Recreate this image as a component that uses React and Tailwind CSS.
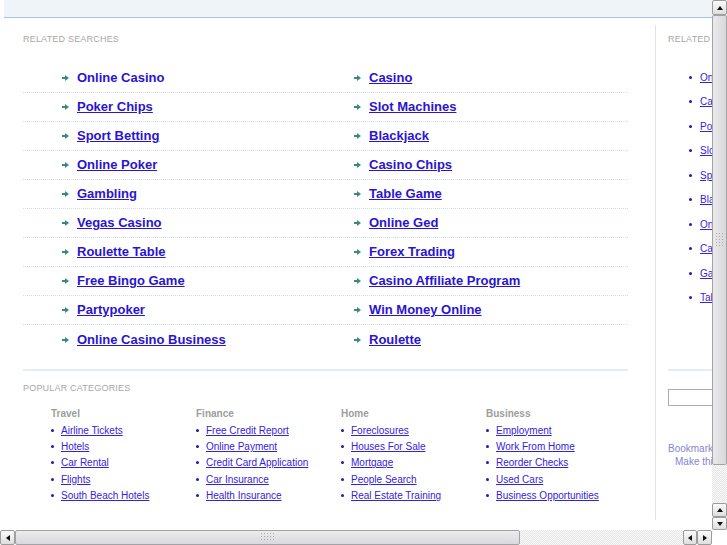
import React from 'react';

const related = [
  ['Online Casino', 'Casino'],
  ['Poker Chips', 'Slot Machines'],
  ['Sport Betting', 'Blackjack'],
  ['Online Poker', 'Casino Chips'],
  ['Gambling', 'Table Game'],
  ['Vegas Casino', 'Online Ged'],
  ['Roulette Table', 'Forex Trading'],
  ['Free Bingo Game', 'Casino Affiliate Program'],
  ['Partypoker', 'Win Money Online'],
  ['Online Casino Business', 'Roulette'],
];

const categories = [
  { title: 'Travel', links: ['Airline Tickets', 'Hotels', 'Car Rental', 'Flights', 'South Beach Hotels'] },
  { title: 'Finance', links: ['Free Credit Report', 'Online Payment', 'Credit Card Application', 'Car Insurance', 'Health Insurance'] },
  { title: 'Home', links: ['Foreclosures', 'Houses For Sale', 'Mortgage', 'People Search', 'Real Estate Training'] },
  { title: 'Business', links: ['Employment', 'Work From Home', 'Reorder Checks', 'Used Cars', 'Business Opportunities'] },
];

const sideLinks = [
  'Online Casino', 'Casino', 'Poker Chips', 'Slot Machines', 'Sport Betting',
  'Blackjack', 'Online Poker', 'Casino Chips', 'Gambling', 'Table Game',
];

const Arrow = () => (
  <svg width="7" height="6" viewBox="0 0 7 6" className="shrink-0">
    <rect x="0" y="2" width="3" height="2" fill="#3b8a82" />
    <path d="M3 0 L7 3 L3 6 Z" fill="#3b8a82" />
  </svg>
);

const SearchCell = ({ label, first, pad }) => (
  <div className={`flex items-center ${pad}`}>
    <Arrow />
    <a
      href="#"
      className={`ml-[8px] text-[13px] font-bold text-[#2a14d2] whitespace-nowrap ${first ? 'no-underline' : 'underline'}`}
    >
      {label}
    </a>
  </div>
);

const Tri = ({ dir }) => {
  const d = {
    up: 'M0 4 L3 0 L6 4 Z',
    down: 'M0 0 L6 0 L3 4 Z',
    left: 'M4 0 L4 6 L0 3 Z',
    right: 'M0 0 L0 6 L4 3 Z',
  }[dir];
  const vert = dir === 'up' || dir === 'down';
  return (
    <svg width={vert ? 6 : 4} height={vert ? 4 : 6} viewBox={vert ? '0 0 6 4' : '0 0 4 6'}>
      <path d={d} fill="#111" />
    </svg>
  );
};

const Btn = ({ dir, cls }) => (
  <div className={`flex items-center justify-center shrink-0 border border-[#9c9c9c] rounded-[2px] bg-gradient-to-b from-[#fbfbfb] to-[#dedede] ${cls}`}>
    <Tri dir={dir} />
  </div>
);

const Grip = () => (
  <svg width="15" height="9" viewBox="0 0 15 9">
    {[0, 1, 2].map((r) =>
      [0, 1, 2, 3, 4].map((c) => (
        <rect key={`${r}-${c}`} x={c * 3} y={r * 3} width="1" height="1" fill="#a9a9a9" />
      ))
    )}
  </svg>
);

const track = 'bg-[repeating-conic-gradient(#e6e6e6_0_25%,#f9f9f9_0_50%)] bg-[length:2px_2px]';

export default function App() {
  return (
    <div className="w-[727px] h-[545px] flex flex-col overflow-hidden bg-white font-['Liberation_Sans',Arial,sans-serif]">
      <div className="flex flex-1 min-h-0">
        <div className="flex-1 overflow-hidden">
          <div className="ml-[4px] h-[18px] bg-[#eff4f9] border-b border-[#a9c4ea]" />

          <div className="flex pt-[7px]">
            <div className="ml-[23px] w-[605px] shrink-0">
              <div className="mt-[9px] h-[11px] leading-[11px] text-[9px] text-[#a8a8a8] tracking-[0.2px]">
                RELATED SEARCHES
              </div>

              <div className="mt-[19px]">
                {related.map(([a, b], i) => (
                  <div
                    key={a}
                    className={`flex h-[29px] ${i < related.length - 1 ? 'border-b border-dotted border-[#cfdcf1]' : ''}`}
                  >
                    <div className="w-[291px] shrink-0 flex">
                      <SearchCell label={a} first={i === 0} pad="pl-[39px]" />
                    </div>
                    <SearchCell label={b} pad="pl-[40px]" />
                  </div>
                ))}
              </div>

              <div className="mt-[15px] h-[2px] bg-[#e4ecf7]" />

              <div className="mt-[12px] h-[11px] leading-[11px] text-[9px] text-[#a8a8a8] tracking-[0.2px]">
                POPULAR CATEGORIES
              </div>

              <div className="mt-[14px] pl-[28px] flex">
                {categories.map((c) => (
                  <div key={c.title} className="w-[145px] shrink-0">
                    <div className="h-[12px] leading-[12px] text-[10px] font-bold text-[#9d9d9d]">{c.title}</div>
                    <div className="mt-[2px]">
                      {c.links.map((l) => (
                        <div key={l} className="h-[16.4px] flex items-center">
                          <span className="w-[3px] h-[3px] rounded-full bg-[#2a14b8] shrink-0" />
                          <a href="#" className="ml-[7px] text-[10px] text-[#3522dc] underline whitespace-nowrap">
                            {l}
                          </a>
                        </div>
                      ))}
                    </div>
                  </div>
                ))}
              </div>
            </div>

            <div className="ml-[27px] w-[220px] h-[495px] shrink-0 border-l border-[#dbe3f1] pl-[12px]">
              <div className="mt-[9px] h-[11px] leading-[11px] text-[9px] text-[#a8a8a8] tracking-[0.2px]">
                RELATED SEARCHES
              </div>
              <div className="mt-[20px]">
                {sideLinks.map((l) => (
                  <div key={l} className="h-[24.5px] flex items-center pl-[21px]">
                    <span className="w-[3px] h-[3px] rounded-full bg-[#2a14b8] shrink-0" />
                    <a href="#" className="ml-[8px] text-[10px] text-[#3522dc] underline whitespace-nowrap">
                      {l}
                    </a>
                  </div>
                ))}
              </div>
              <div className="mt-[59px] h-[2px] bg-[#e4ecf7]" />
              <div className="mt-[18px] h-[17px] w-[160px] border border-[#ababab]" />
              <div className="mt-[37px] h-[12px] leading-[12px] text-[10px] text-[#8585d0] whitespace-nowrap">
                Bookmark this page
              </div>
              <div className="mt-[1px] pl-[7px] h-[12px] leading-[12px] text-[10px] text-[#8585d0] whitespace-nowrap">
                Make this your homepage
              </div>
            </div>
          </div>
        </div>

        <div className={`w-[15px] shrink-0 flex flex-col ${track}`}>
          <Btn dir="up" cls="h-[15px]" />
          <div className="h-[450px] shrink-0 border border-[#a3a3a3] rounded-[2px] bg-gradient-to-r from-[#e9e9ec] to-[#d9d9dd] flex items-center justify-center">
            <div className="w-[9px] overflow-hidden flex justify-center">
              <svg width="9" height="15" viewBox="0 0 9 15">
                {[0, 1, 2].map((c) =>
                  [0, 1, 2, 3, 4].map((r) => (
                    <rect key={`${r}-${c}`} x={c * 3 + 1} y={r * 3} width="1" height="1" fill="#a9a9a9" />
                  ))
                )}
              </svg>
            </div>
          </div>
          <div className="flex-1" />
          <Btn dir="up" cls="h-[14px]" />
          <Btn dir="down" cls="h-[13px]" />
        </div>
      </div>

      <div className="h-[15px] shrink-0 flex">
        <Btn dir="left" cls="w-[15px]" />
        <div className="w-[505px] shrink-0 border border-[#a3a3a3] rounded-[2px] bg-gradient-to-b from-[#ececef] to-[#d9d9dd] flex items-center pl-[245px]">
          <Grip />
        </div>
        <div className={`flex-1 ${track}`} />
        <Btn dir="left" cls="w-[14px]" />
        <Btn dir="right" cls="w-[15px]" />
        <div className="w-[15px] shrink-0 bg-white" />
      </div>
    </div>
  );
}
